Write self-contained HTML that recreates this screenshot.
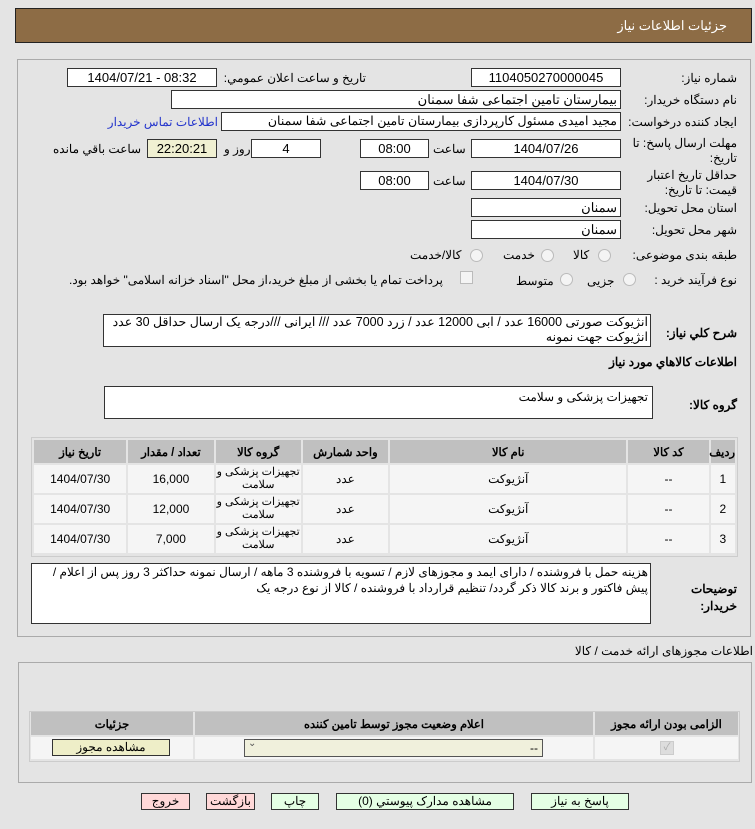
<!DOCTYPE html>
<html><head><meta charset="utf-8"><style>
body{margin:0;width:755px;height:829px;background:#e4e4e4;font-family:"Liberation Sans","Noto Sans CJK SC",sans-serif;font-size:12px;color:#000;position:relative;overflow:hidden}
.a{position:absolute;white-space:nowrap}
.r{direction:rtl;text-align:right}
.f{position:absolute;background:#fff;border:1px solid #333;box-sizing:border-box;height:19px;line-height:17px;text-align:center;font-size:13px}
.fr{text-align:right;padding-right:3px;direction:rtl}
.rad{position:absolute;width:11px;height:11px;border-radius:50%;border:1px solid #bbb;background:#f4f4f4}
.b{font-weight:bold}
table{border-collapse:separate;border-spacing:2px;position:absolute;font-size:12px;table-layout:fixed}
td{background:#f5f5f5;text-align:center;direction:rtl;padding:0;overflow:hidden;white-space:nowrap}
th{background:#c0c0c0;font-weight:bold;direction:rtl;padding:0;font-size:11.5px;white-space:nowrap}
.g{line-height:13px;font-size:11px;letter-spacing:-0.3px}
.btn{position:absolute;top:793px;height:17px;border:1px solid #333;box-sizing:border-box;text-align:center;line-height:15px;font-size:12px;direction:rtl}
</style></head><body>
<div class="a" style="left:15px;top:8px;width:737px;height:35px;background:#8d6c45;border:1px solid #222;box-sizing:border-box"></div>
<div class="a r" style="right:28px;top:18px;color:#fff;font-size:13px">جزئیات اطلاعات نیاز</div>

<div class="a" style="left:17px;top:59px;width:734px;height:578px;border:1px solid #aaa;box-sizing:border-box"></div>

<div class="a r" style="right:18px;top:71px">شماره نیاز:</div>
<div class="f" style="left:471px;top:68px;width:150px">1104050270000045</div>
<div class="a r" style="right:389px;top:71px">تاریخ و ساعت اعلان عمومي:</div>
<div class="f" style="left:67px;top:68px;width:150px">1404/07/21 - 08:32</div>

<div class="a r" style="right:18px;top:93px">نام دستگاه خریدار:</div>
<div class="f fr" style="left:171px;top:90px;width:450px">بیمارستان تامین اجتماعی شفا سمنان</div>

<div class="a r" style="right:18px;top:115px">ایجاد کننده درخواست:</div>
<div class="f fr" style="left:221px;top:112px;width:400px;font-size:12.5px">مجید امیدی مسئول کارپردازی بیمارستان تامین اجتماعی شفا سمنان</div>
<div class="a r" style="right:537px;top:115px;color:#2233cc">اطلاعات تماس خریدار</div>

<div class="a r" style="right:18px;top:136px;line-height:15px">مهلت ارسال پاسخ: تا<br>تاریخ:</div>
<div class="f" style="left:471px;top:139px;width:150px">1404/07/26</div>
<div class="a r" style="left:433px;top:142px">ساعت</div>
<div class="f" style="left:360px;top:139px;width:69px">08:00</div>
<div class="f" style="left:251px;top:139px;width:70px">4</div>
<div class="a r" style="left:224px;top:142px">روز و</div>
<div class="f" style="left:147px;top:139px;width:70px;background:#f0f0d2">22:20:21</div>
<div class="a r" style="left:53px;top:142px">ساعت باقي مانده</div>

<div class="a r" style="right:18px;top:168px;line-height:15px">حداقل تاریخ اعتبار<br>قیمت: تا تاریخ:</div>
<div class="f" style="left:471px;top:171px;width:150px">1404/07/30</div>
<div class="a r" style="left:433px;top:174px">ساعت</div>
<div class="f" style="left:360px;top:171px;width:69px">08:00</div>

<div class="a r" style="right:18px;top:201px">استان محل تحویل:</div>
<div class="f fr" style="left:471px;top:198px;width:150px">سمنان</div>
<div class="a r" style="right:18px;top:223px">شهر محل تحویل:</div>
<div class="f fr" style="left:471px;top:220px;width:150px">سمنان</div>

<div class="a r" style="right:18px;top:248px">طبقه بندی موضوعی:</div>
<div class="rad" style="left:598px;top:249px"></div><div class="a r" style="left:573px;top:248px">کالا</div>
<div class="rad" style="left:541px;top:249px"></div><div class="a r" style="left:503px;top:248px">خدمت</div>
<div class="rad" style="left:470px;top:249px"></div><div class="a r" style="left:410px;top:248px">کالا/خدمت</div>

<div class="a r" style="right:18px;top:273px">نوع فرآیند خرید :</div>
<div class="rad" style="left:623px;top:273px"></div><div class="a r" style="left:587px;top:274px">جزیی</div>
<div class="rad" style="left:560px;top:273px"></div><div class="a r" style="left:516px;top:274px">متوسط</div>
<div class="a" style="left:460px;top:271px;width:11px;height:11px;border:1px solid #bbb;background:#f4f4f4"></div>
<div class="a r" style="left:69px;top:273px">پرداخت تمام یا بخشی از مبلغ خرید،از محل "اسناد خزانه اسلامی" خواهد بود.</div>

<div class="a r b" style="right:18px;top:326px">شرح کلي نیاز:</div>
<div class="a r" style="left:103px;top:314px;width:548px;height:33px;background:#fff;border:1px solid #333;box-sizing:border-box;white-space:normal;line-height:15px;padding-right:2px;font-size:12.5px">انژیوکت صورتی 16000 عدد / ابی 12000 عدد / زرد 7000 عدد /// ایرانی ///درجه یک ارسال حداقل 30 عدد انژیوکت جهت نمونه</div>
<div class="a r b" style="right:18px;top:355px">اطلاعات کالاهاي مورد نیاز</div>

<div class="a r b" style="right:18px;top:398px">گروه کالا:</div>
<div class="a r" style="left:104px;top:386px;width:549px;height:33px;background:#fff;border:1px solid #333;box-sizing:border-box;padding:3px 4px 0 0">تجهیزات پزشکی و سلامت</div>

<div class="a" style="left:31px;top:437px;width:707px;height:120px;border:1px solid #ccc;box-sizing:border-box"></div>
<table style="left:32px;top:438px;width:705px">
<colgroup><col style="width:91px"><col style="width:84px"><col style="width:84px"><col style="width:84px"><col style="width:233px"><col style="width:79px"><col style="width:24px"></colgroup>
<tr style="height:23px"><th>تاریخ نیاز</th><th>تعداد / مقدار</th><th>گروه کالا</th><th>واحد شمارش</th><th>نام کالا</th><th>کد کالا</th><th>ردیف</th></tr>
<tr style="height:28px"><td>1404/07/30</td><td>16,000</td><td class="g">تجهیزات پزشکی و<br>سلامت</td><td>عدد</td><td>آنژیوکت</td><td>--</td><td>1</td></tr>
<tr style="height:28px"><td>1404/07/30</td><td>12,000</td><td class="g">تجهیزات پزشکی و<br>سلامت</td><td>عدد</td><td>آنژیوکت</td><td>--</td><td>2</td></tr>
<tr style="height:28px"><td>1404/07/30</td><td>7,000</td><td class="g">تجهیزات پزشکی و<br>سلامت</td><td>عدد</td><td>آنژیوکت</td><td>--</td><td>3</td></tr>
</table>

<div class="a r b" style="right:18px;top:581px;line-height:17px">توضیحات<br>خریدار:</div>
<div class="a r" style="left:31px;top:563px;width:620px;height:61px;background:#fff;border:1px solid #333;box-sizing:border-box;white-space:normal;line-height:16px;padding-right:2px;font-size:12px">هزینه حمل با فروشنده / دارای ایمد و مجوزهای لازم / تسویه با فروشنده 3 ماهه / ارسال نمونه حداکثر 3 روز پس از اعلام / پیش فاکتور و برند کالا ذکر گردد/ تنظیم قرارداد با فروشنده / کالا از نوع درجه یک</div>

<div class="a r" style="right:2px;top:644px">اطلاعات مجوزهای ارائه خدمت / کالا</div>
<div class="a" style="left:18px;top:662px;width:734px;height:121px;border:1px solid #aaa;box-sizing:border-box"></div>
<div class="a" style="left:29px;top:711px;width:711px;height:51px;border:1px solid #ccc;box-sizing:border-box"></div>
<table style="left:29px;top:710px;width:711px;border-spacing:2px">
<colgroup><col style="width:162px"><col style="width:398px"><col></colgroup>
<tr style="height:23px"><th>جزئیات</th><th>اعلام وضعیت مجوز توسط تامین کننده</th><th>الزامی بودن ارائه مجوز</th></tr>
<tr style="height:22px"><td></td><td></td><td></td></tr>
</table>
<div class="a" style="left:52px;top:739px;width:118px;height:17px;background:#eeeec8;border:1px solid #333;box-sizing:border-box;text-align:center;line-height:15px">مشاهده مجوز</div>
<div class="a" style="left:244px;top:739px;width:299px;height:18px;background:#f0f0dc;border:1px solid #555;box-sizing:border-box"><span style="position:absolute;left:3px;top:-2px;font-size:10px;color:#555">&#x2304;</span><span style="position:absolute;right:4px;top:1px">--</span></div>
<div class="a" style="left:660px;top:741px;width:12px;height:12px;background:#ddd;border:1px solid #ccc;color:#aaa;font-size:10px;line-height:12px;text-align:center">✓</div>

<div class="btn" style="left:531px;width:98px;background:#e4ffe4">پاسخ به نیاز</div>
<div class="btn" style="left:336px;width:178px;background:#e4ffe4">مشاهده مدارک پیوستي (0)</div>
<div class="btn" style="left:271px;width:48px;background:#e4ffe4">چاپ</div>
<div class="btn" style="left:206px;width:49px;background:#ffd8d8">بازگشت</div>
<div class="btn" style="left:141px;width:49px;background:#ffd8d8">خروج</div>
</body></html>
